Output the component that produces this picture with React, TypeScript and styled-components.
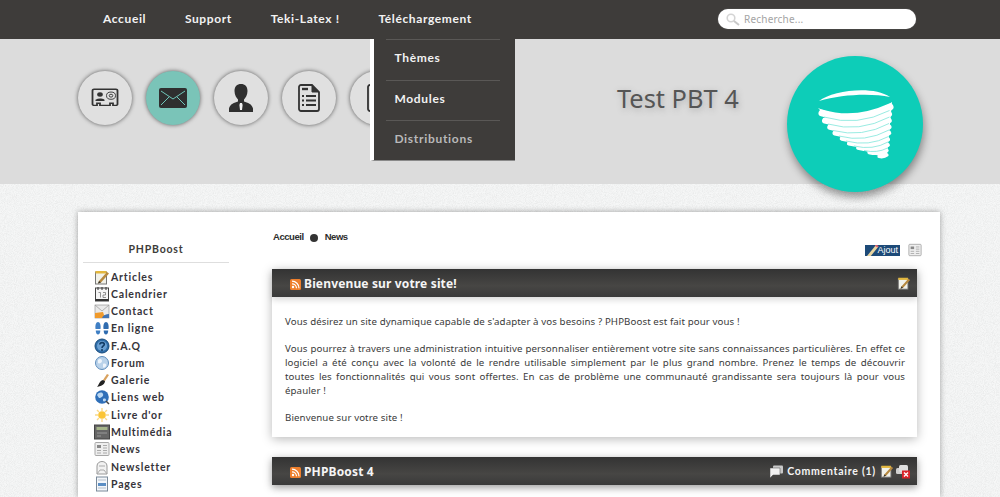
import React from "react";
import styled, { createGlobalStyle } from "styled-components";

const noise = encodeURIComponent(
  `<svg xmlns="http://www.w3.org/2000/svg" width="240" height="240"><filter id="n"><feTurbulence type="fractalNoise" baseFrequency="1.1" numOctaves="2" seed="4"/><feColorMatrix values="0 0 0 0 0.55 0 0 0 0 0.56 0 0 0 0 0.56 0 0 0 0.5 -0.16"/></filter><rect width="240" height="240" filter="url(#n)"/></svg>`
);

const Global = createGlobalStyle`
  html, body { margin: 0; padding: 0; height: 497px; overflow: hidden; }
  body {
    font-family: "Noto Sans", "Open Sans", sans-serif;
    color: #3e3c3a;
    background-color: #f6f7f7;
    background-image: url("data:image/svg+xml,${noise}");
  }
`;

const TopBar = styled.header`
  height: 39px;
  background: #3e3c3a;
  display: flex;
  align-items: flex-start;
  padding-left: 103px;
  position: relative;
  z-index: 5;
`;
const Nav = styled.nav`
  display: flex;
  gap: 38.7px;
  width: 615px;
`;
const NavItem = styled.div`
  position: relative;
  font: 700 12px/38px "Lato", sans-serif;
  letter-spacing: 0.62px;
  color: #f2f2f2;
`;
const Dropdown = styled.div`
  position: absolute;
  top: 39px;
  left: -8px;
  width: 145px;
  height: 122px;
  background: #3e3c3a;
  border-left: 4px solid #fff;
  border-bottom: 1px solid #8a8a8a;
  box-sizing: border-box;
`;
const DropItem = styled.div<{ $muted?: boolean }>`
  height: 40.5px;
  margin: 0 15px 0 12px;
  padding-left: 8px;
  border-top: 1px solid #5a5856;
  box-sizing: border-box;
  font: 700 12px/36px "Lato", sans-serif;
  letter-spacing: 0.7px;
  color: ${(p) => (p.$muted ? "#b9b9b9" : "#f2f2f2")};
`;
const SearchBox = styled.label`
  width: 198px;
  height: 20px;
  margin-top: 9px;
  background: #fff;
  border-radius: 10px;
  display: flex;
  align-items: center;
  gap: 4px;
  padding-left: 8px;
  box-sizing: border-box;
  box-shadow: 0 0 1px #999;
`;
const SearchInput = styled.input`
  border: 0;
  outline: 0;
  background: transparent;
  padding: 0;
  width: 150px;
  font: 10px "Noto Sans", sans-serif;
  letter-spacing: 0.2px;
  &::placeholder { color: #a4a4a4; opacity: 1; }
`;

const Banner = styled.div`
  height: 145px;
  background: #dcdcdc;
  display: flex;
  align-items: flex-start;
  padding-left: 78px;
  position: relative;
  z-index: 3;
`;
const Shortcuts = styled.div`
  display: flex;
  gap: 14px;
  margin-top: 32px;
  width: 539px;
`;
const Round = styled.div<{ $active?: boolean }>`
  width: 54px;
  height: 54px;
  border-radius: 50%;
  background: ${(p) => (p.$active ? "#7ac4b8" : "#e0e0e0")};
  box-shadow: 0 0 4px #5a5a5a;
  display: flex;
  align-items: center;
  justify-content: center;
  flex: none;
`;
const SiteName = styled.h1`
  margin: 42px 0 0;
  width: 170px;
  font: 400 25.4px/34px "Noto Sans", sans-serif;
  color: #555;
  text-shadow: 1px 2px 6px #aaa;
  white-space: nowrap;
`;
const Logo = styled.div`
  width: 136px;
  height: 136px;
  margin-top: 17px;
  flex: none;
  border-radius: 50%;
  background: #0dcdb8;
  box-shadow: 1px 5px 9px rgba(0, 0, 0, 0.4);
`;

const Sheet = styled.main`
  width: 862px;
  height: 285px;
  margin: 28px 0 0 78px;
  background: #fff;
  box-shadow: 0 0 6px rgba(0, 0, 0, 0.35);
  display: flex;
  position: relative;
  z-index: 1;
`;
const Sidebar = styled.aside`
  width: 194px;
  height: 285px;
  overflow: hidden;
  flex: none;
  padding: 31px 0 0 5px;
  box-sizing: border-box;
`;
const SideTitle = styled.div`
  width: 146px;
  height: 19px;
  border-bottom: 1px solid #dedede;
  text-align: center;
  font: 700 10.5px/13px "Lato", sans-serif;
  letter-spacing: 0.8px;
  color: #3e3c3a;
`;
const SideList = styled.ul`
  list-style: none;
  margin: 5px 0 0 11px;
  padding: 0;
`;
const SideItem = styled.li`
  height: 17.27px;
  display: flex;
  align-items: center;
  gap: 1px;
  font: 700 10.5px "Lato", sans-serif;
  letter-spacing: 0.82px;
  color: #36343a;
  white-space: nowrap;
`;
const Content = styled.section`
  width: 645px;
  height: 285px;
  flex: none;
`;
const Crumbs = styled.div`
  display: flex;
  align-items: center;
  height: 14px;
  margin: 18px 0 0 1px;
  font: 700 9.5px/14px "Liberation Sans", sans-serif;
  letter-spacing: -0.45px;
  color: #2d2d2d;
`;
const CrumbDot = styled.span`
  width: 8px;
  height: 8px;
  border-radius: 50%;
  background: #333;
  margin: 1px 7px 0 6px;
`;
const Tools = styled.div`
  display: flex;
  justify-content: flex-end;
  align-items: center;
  gap: 8px;
  height: 16px;
  margin: -2px -5px 0 0;
`;
const AddBadge = styled.span`
  width: 35px;
  height: 11px;
  background: #1d4a78;
  display: flex;
  align-items: center;
  justify-content: flex-end;
  padding-right: 2px;
  box-sizing: border-box;
  position: relative;
  font: 9px/11px "Liberation Sans", sans-serif;
  color: #fff;
  overflow: hidden;
`;
const Article = styled.article`
  margin-top: 11px;
  background: #fff;
  box-shadow: 0 2px 10px rgba(0, 0, 0, 0.28);
  & + & { margin-top: 20px; }
`;
const ArticleHead = styled.div`
  height: 28px;
  background: linear-gradient(#333, #474644 60%, #3a3a3a);
  display: flex;
  align-items: center;
  padding: 0 6px 0 18px;
  color: #f5f5f5;
  box-shadow: 0 3px 6px rgba(0, 0, 0, 0.15);
`;
const ArticleTitle = styled.h2`
  margin: 0 0 0 3px;
  flex: 1;
  font: 700 12px "Noto Sans", sans-serif;
  letter-spacing: 0.15px;
`;
const HeadActions = styled.div`
  display: flex;
  align-items: center;
  gap: 2px;
`;
const CommentLabel = styled.span`
  font: 700 10.5px "Lato", sans-serif;
  letter-spacing: 0.75px;
  margin: 0 2px 0 2px;
`;
const ArticleBody = styled.div`
  height: 140px;
  padding: 18px 12px 0 13px;
  box-sizing: border-box;
  font: 9.7px/13.72px "Noto Sans", sans-serif;
  letter-spacing: 0.1px;
  color: #3a3a3a;
  p { margin: 0 0 13.72px; }
  p:last-child { margin: 0; }
`;
const FullLine = styled.span`
  display: block;
  text-align: justify;
  text-align-last: justify;
`;

const Card = () => (
  <svg width="28" height="21" viewBox="0 0 28 26" preserveAspectRatio="none" fill="none" stroke="#333" strokeWidth="1.8">
    <path d="M3 1.500h22a1.500 1.500 0 0 1 1.500 1.500v17a1.500 1.500 0 0 1-1.500 1.500h-3v-2.500h-3v2.500h-10v-2.500h-3v2.500H3A1.500 1.500 0 0 1 1.500 20V3A1.500 1.500 0 0 1 3 1.500z" />
    <circle cx="9" cy="8" r="2.800" fill="#333" stroke="none" />
    <path d="M4.500 16h9v-1.500c-1.500-1.500-3-1.500-4.500-1.500s-3 .5-4.500 1.500z" fill="#333" stroke="none" />
    <circle cx="20" cy="9.500" r="4.500" strokeWidth="1" />
    <circle cx="20" cy="9.500" r="1.800" strokeWidth="1" />
  </svg>
);
const Mail = () => (
  <svg width="28" height="20" viewBox="0 0 28 20">
    <rect width="28" height="20" rx="2" fill="#2f2f2f" />
    <path d="M2 3l12 8 12-8M2 17l8-8M26 17l-8-8" fill="none" stroke="#6fc7ba" strokeWidth="1" />
  </svg>
);
const Person = () => (
  <svg width="24" height="28" viewBox="0 0 24 28">
    <path d="M12 0c4 0 6.500 2.500 6.500 7 0 4-2 7-3.500 8.500v2c3.500 1 8 2.500 9 7V28H0v-3.500c1-4.500 5.500-6 9-7v-2C7.500 14 5.500 11 5.500 7 5.500 2.500 8 0 12 0z" fill="#2f2f2f" />
    <path d="M11 19h2l.6 2-.6 5h-2l-.6-5z" fill="#f0f0f0" />
  </svg>
);
const Doc = () => (
  <svg width="22" height="28" viewBox="0 0 22 28" fill="none" stroke="#333">
    <path d="M3 1h11l7 7v17a2 2 0 0 1-2 2H3a2 2 0 0 1-2-2V3a2 2 0 0 1 2-2z" strokeWidth="1.800" />
    <path d="M14 1v7h7z" fill="#333" />
    <path d="M4 5h6" strokeWidth="2.400" />
    <path d="M4 12h2M8 12h10M4 16.500h2M8 16.500h10M4 21h2M8 21h10" strokeWidth="2" />
  </svg>
);
const HiddenDoc = () => (
  <svg width="20" height="28" viewBox="0 0 20 28" fill="none" stroke="#333" strokeWidth="1.800">
    <rect x="1" y="1" width="18" height="26" rx="2" />
  </svg>
);
const Tornado = () => (
  <svg width="136" height="136" viewBox="0 0 136 136">
    <defs>
      <filter id="soft" x="-5%" y="-5%" width="110%" height="110%">
        <feGaussianBlur stdDeviation="0.35" />
      </filter>
    </defs>
    <g filter="url(#soft)" fill="none" stroke="#fff" strokeLinecap="round">
      <path d="M32 45C45 35 85 29 103 41 85 37 55 38 32 45z" fill="#fff" stroke="none" />
      <path d="M31 52C55 63 85 60 105 46L100 100 92 100 71 92 55 82 43 71 36 57z" fill="#fff" stroke="none" />
      <path d="M35 57Q68 67 103 51" strokeWidth="7" />
      <path d="M38 64.500Q70 74 102 58" strokeWidth="6" />
      <path d="M43 71Q73 80 102 64.500" strokeWidth="5.500" />
      <path d="M48 77Q76 84.500 102 71" strokeWidth="5" />
      <path d="M55 82.500Q80 89 102 77" strokeWidth="4.600" />
      <path d="M62 87.500Q84 93 101 83.500" strokeWidth="4.200" />
      <path d="M71 92Q87 96 101 89" strokeWidth="3.800" />
      <path d="M82 96.500Q92 99 100 94.500" strokeWidth="3.400" />
      <path d="M92 100.500Q97 101.500 100 99" strokeWidth="3.200" />
      <g stroke="#7fe6da" strokeWidth="0.800" strokeLinecap="butt">
        <path d="M37 61Q70 71 102.500 54.500" />
        <path d="M41 68Q72 77 102.500 61" />
        <path d="M46 74.500Q75 82 102 67.500" />
        <path d="M52 80Q78 87 102 74" />
        <path d="M59 85Q82 91 101.500 80.500" />
        <path d="M67 90Q86 94.500 101 86" />
        <path d="M77 94.500Q90 97.500 100.500 92" />
      </g>
    </g>
  </svg>
);
const Glass = () => (
  <svg width="14" height="13" viewBox="0 0 14 13" fill="none">
    <circle cx="5" cy="5" r="3.800" stroke="#d4d4d4" strokeWidth="1.600" />
    <path d="M8 8l5 4" stroke="#c8c8c8" strokeWidth="2" />
  </svg>
);

type Mini = "articles" | "calendar" | "contact" | "online" | "faq" | "forum" | "gallery" | "web" | "sun" | "media" | "news" | "letter" | "pages";

const MiniIcon = ({ kind, size = 16 }: { kind: Mini; size?: number }) => {
  const body: Record<Mini, React.ReactNode> = {
    articles: (
      <>
        <rect x="1.500" y="3" width="11" height="12" fill="#f2f2ea" stroke="#777" />
        <rect x="1.500" y="2" width="11" height="2.500" fill="#e3b73e" />
        <path d="M5 12l8-9 2 1.500-8 9-3 1z" fill="#b7893f" />
        <path d="M5 12l2 1.500-3 1z" fill="#333" />
      </>
    ),
    calendar: (
      <>
        <rect x="1.500" y="2" width="13" height="13" fill="#f5f5f5" stroke="#444" />
        <rect x="1.500" y="13" width="13" height="2" fill="#333" />
        <path d="M4 1v3M8 1v3M12 1v3" stroke="#333" />
        <path d="M4.500 6.500h2v5M9 6.500h2.500v2.500H9v2.500h3" stroke="#777" fill="none" strokeWidth="0.800" />
      </>
    ),
    contact: (
      <>
        <rect x="1" y="2" width="14" height="13" fill="#eaeaea" stroke="#888" strokeWidth="0.600" />
        <path d="M1 2l7 6 7-6" fill="none" stroke="#999" strokeWidth="0.700" />
        <path d="M1 15v-5l8-1 1 3 5 1v2z" fill="#f09a2c" />
        <path d="M8 15c1-3 4-4 7-4v4z" fill="#3f73b4" />
      </>
    ),
    online: (
      <>
        <path d="M4 2c2 0 3 3 2.500 7h-5C1 5 2 2 4 2z" fill="#3f7fc4" />
        <path d="M1.800 10.500h4.500c0 2.500-1 4-2.300 4S1.800 13 1.800 10.500z" fill="#3f7fc4" />
        <path d="M12 2c-2 0-3 3-2.500 7h5C15 5 14 2 12 2z" fill="#2f6cb0" />
        <path d="M9.700 10.500h4.500c0 2.500-1 4-2.300 4s-2.200-1.500-2.200-4z" fill="#2f6cb0" />
      </>
    ),
    faq: (
      <>
        <circle cx="8" cy="8" r="7" fill="#2f6da8" stroke="#174a7c" />
        <circle cx="8" cy="8" r="5" fill="#6ba0d3" />
        <path d="M5.800 6.500C6 4 10.300 4 10.300 6.500 10.300 8 8 8 8 10" fill="none" stroke="#123c66" strokeWidth="1.600" />
        <circle cx="8" cy="12" r="1" fill="#123c66" />
      </>
    ),
    forum: (
      <>
        <circle cx="8" cy="8" r="6.500" fill="#b9d2ea" stroke="#5f8ebd" />
        <path d="M4 5c2-2 4-1 4 1S5 9 4 8zM9 9c2-1 4 0 3 2s-3 2-3 1z" fill="#eef4fb" />
      </>
    ),
    gallery: (
      <>
        <path d="M9 8l4-6 2 1-4 6z" fill="#d9a25f" />
        <path d="M9 8l2 1c0 3-3 5-8 6 2-2 2-6 6-7z" fill="#222" />
      </>
    ),
    web: (
      <>
        <circle cx="8" cy="8" r="6.800" fill="#2f6fb8" />
        <path d="M3 6c2-3 5-3 6-1s-2 4-4 4zM9 10c2-1 3 0 3 1s-2 2-3 1z" fill="#bcd8f2" />
        <path d="M12 12l3 3" stroke="#444" strokeWidth="1.500" />
      </>
    ),
    sun: (
      <>
        <circle cx="8" cy="8" r="3.800" fill="#fbc535" />
        <path d="M8 1v3M8 12v3M1 8h3M12 8h3M3 3l2 2M11 11l2 2M13 3l-2 2M5 11l-2 2" stroke="#f8d98a" strokeWidth="1.400" />
      </>
    ),
    media: (
      <>
        <rect x="0.500" y="1" width="15" height="14" fill="#666" stroke="#444" />
        <rect x="2.500" y="3" width="11" height="3" fill="#a6b58a" />
        <path d="M3 9h10M3 12h4" stroke="#999" />
      </>
    ),
    news: (
      <>
        <rect x="1" y="1.500" width="14" height="13" rx="1" fill="#eee" stroke="#a8a8a8" />
        <rect x="3" y="4" width="4" height="3" fill="#888" />
        <path d="M9 4.500h4M9 7h4M3 9.500h4M9 9.500h4M3 12h4M9 12h4" stroke="#aaa" />
      </>
    ),
    letter: (
      <>
        <path d="M3 15V7c0-6 10-6 10 0v8z" fill="#f2f2f2" stroke="#999" />
        <path d="M3 15l3-4h4l3 4M5 7h6" fill="none" stroke="#aaa" />
      </>
    ),
    pages: (
      <>
        <rect x="2.500" y="1" width="11" height="14" fill="#f3f6fa" stroke="#7a8a9a" />
        <rect x="4" y="7" width="8" height="3" fill="#5b8ec4" />
        <path d="M4 4h8M4 12h8" stroke="#b5c0cc" />
      </>
    ),
  };
  return (
    <svg width={size} height={size} viewBox="0 0 16 16" style={{ flex: "none" }}>
      {body[kind]}
    </svg>
  );
};

const Rss = () => (
  <svg width="11" height="11" viewBox="0 0 11 11" style={{ marginTop: 2 }}>
    <rect width="11" height="11" rx="1.500" fill="#ee7f2d" />
    <circle cx="3" cy="8" r="1.200" fill="#fff" />
    <path d="M2 4.800A4.500 4.500 0 0 1 6.500 9.300M2 2.200a7 7 0 0 1 7 7" fill="none" stroke="#fff" strokeWidth="1.200" />
  </svg>
);
const Bubbles = () => (
  <svg width="14" height="13" viewBox="0 0 14 13">
    <rect x="4" y="0.500" width="10" height="8" rx="1" fill="#c9c9c9" />
    <path d="M1 3h10v7H4l-3 3z" fill="#f2f2f2" stroke="#444" strokeWidth="0.500" />
  </svg>
);
const Trash = () => (
  <svg width="15" height="15" viewBox="0 0 15 15">
    <rect x="0" y="4" width="8" height="6" rx="1.500" fill="#d0d0d0" />
    <rect x="3" y="1" width="9" height="7" rx="1.500" fill="#dfdfdf" />
    <rect x="6" y="6.500" width="8" height="8" fill="#d9232a" />
    <path d="M8 8.500l4 4M12 8.500l-4 4" stroke="#fff" strokeWidth="1.400" />
  </svg>
);
const PencilSlash = () => (
  <svg width="18" height="13" viewBox="0 0 18 13" style={{ position: "absolute", left: 0, top: -1 }}>
    <path d="M2 12l9-11 2.500 1.500L5 13z" fill="#e9d5a0" />
    <path d="M10 2l1-1.500 2.500 1.500-1 1.500z" fill="#e05a6a" />
  </svg>
);

const menu: [Mini, string][] = [
  ["articles", "Articles"],
  ["calendar", "Calendrier"],
  ["contact", "Contact"],
  ["online", "En ligne"],
  ["faq", "F.A.Q"],
  ["forum", "Forum"],
  ["gallery", "Galerie"],
  ["web", "Liens web"],
  ["sun", "Livre d'or"],
  ["media", "Multimédia"],
  ["news", "News"],
  ["letter", "Newsletter"],
  ["pages", "Pages"],
];

export default function App() {
  return (
    <>
      <Global />
      <TopBar>
        <Nav>
          <NavItem>Accueil</NavItem>
          <NavItem>Support</NavItem>
          <NavItem>Teki-Latex !</NavItem>
          <NavItem>
            Téléchargement
            <Dropdown>
              <DropItem>Thèmes</DropItem>
              <DropItem>Modules</DropItem>
              <DropItem $muted>Distributions</DropItem>
            </Dropdown>
          </NavItem>
        </Nav>
        <SearchBox>
          <Glass />
          <SearchInput placeholder="Recherche..." readOnly />
        </SearchBox>
      </TopBar>
      <Banner>
        <Shortcuts>
          <Round><Card /></Round>
          <Round $active><Mail /></Round>
          <Round><Person /></Round>
          <Round><Doc /></Round>
          <Round><HiddenDoc /></Round>
        </Shortcuts>
        <SiteName>Test PBT 4</SiteName>
        <Logo><Tornado /></Logo>
      </Banner>
      <Sheet>
        <Sidebar>
          <SideTitle>PHPBoost</SideTitle>
          <SideList>
            {menu.map(([k, label]) => (
              <SideItem key={label}>
                <MiniIcon kind={k} />
                {label}
              </SideItem>
            ))}
          </SideList>
        </Sidebar>
        <Content>
          <Crumbs>
            Accueil
            <CrumbDot />
            News
          </Crumbs>
          <Tools>
            <AddBadge><PencilSlash />Ajout</AddBadge>
            <MiniIcon kind="news" size={14} />
          </Tools>
          <Article>
            <ArticleHead>
              <Rss />
              <ArticleTitle>Bienvenue sur votre site!</ArticleTitle>
              <HeadActions><MiniIcon kind="articles" size={14} /></HeadActions>
            </ArticleHead>
            <ArticleBody>
              <p>Vous désirez un site dynamique capable de s'adapter à vos besoins ? PHPBoost est fait pour vous !</p>
              <p>
                <FullLine>Vous pourrez à travers une administration intuitive personnaliser entièrement votre site sans connaissances particulières. En effet ce</FullLine>
                <FullLine>logiciel a été conçu avec la volonté de le rendre utilisable simplement par le plus grand nombre. Prenez le temps de découvrir</FullLine>
                <FullLine>toutes les fonctionnalités qui vous sont offertes. En cas de problème une communauté grandissante sera toujours là pour vous</FullLine>
                épauler !
              </p>
              <p>Bienvenue sur votre site !</p>
            </ArticleBody>
          </Article>
          <Article>
            <ArticleHead>
              <Rss />
              <ArticleTitle>PHPBoost 4</ArticleTitle>
              <HeadActions>
                <Bubbles />
                <CommentLabel>Commentaire (1)</CommentLabel>
                <MiniIcon kind="articles" size={14} />
                <Trash />
              </HeadActions>
            </ArticleHead>
          </Article>
        </Content>
      </Sheet>
    </>
  );
}
